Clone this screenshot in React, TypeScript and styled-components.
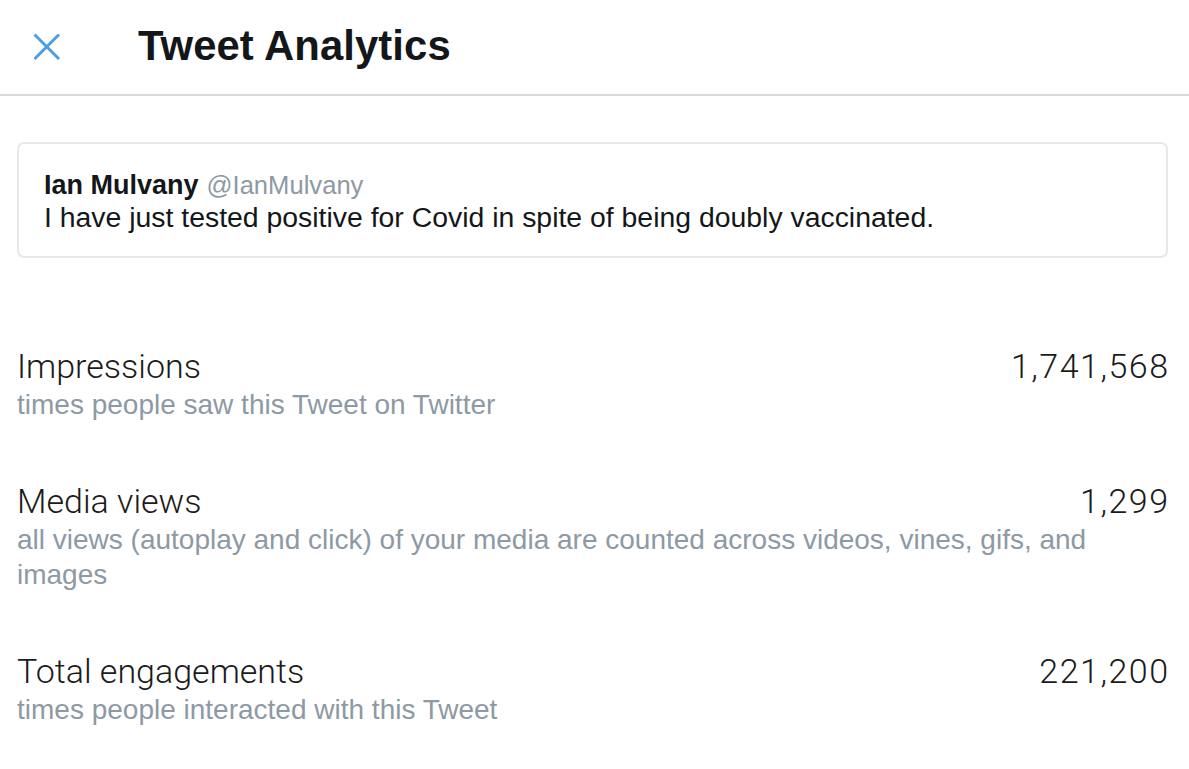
import React from "react";
import styled, { createGlobalStyle } from "styled-components";

const GlobalStyle = createGlobalStyle`
  html, body {
    margin: 0;
    padding: 0;
    background: #fff;
  }
  body {
    font-family: "Liberation Sans", Arial, sans-serif;
    color: #14171a;
  }
`;

const Page = styled.div`
  width: 1189px;
  min-height: 769px;
  display: flex;
  flex-direction: column;
`;

const Header = styled.header`
  height: 96px;
  display: flex;
  align-items: center;
  border-bottom: 2px solid #d9d9d9;
  box-sizing: border-box;
`;

const CloseButton = styled.button`
  width: 138px;
  height: 96px;
  padding: 0 0 0 32px;
  border: none;
  background: none;
  display: flex;
  align-items: center;
  cursor: pointer;
`;

const Title = styled.h1`
  margin: 0 0 2px 0;
  font-family: "Liberation Sans", Arial, sans-serif;
  font-size: 41.8px;
  font-weight: 700;
  color: #14171a;
  letter-spacing: 0.1px;
`;

const Body = styled.main`
  padding: 46px 21px 0 17px;
  display: flex;
  flex-direction: column;
`;

const TweetCard = styled.div`
  border: 2px solid #e6e8ea;
  border-radius: 7px;
  padding: 25px 26px 23px 25px;
`;

const AuthorLine = styled.div`
  display: flex;
  align-items: baseline;
  gap: 8px;
  line-height: 32px;
`;

const AuthorName = styled.span`
  font-size: 27px;
  font-weight: 700;
  color: #14171a;
`;

const Handle = styled.span`
  font-size: 25.6px;
  color: #8d99a4;
`;

const TweetText = styled.p`
  margin: 0;
  font-size: 28.4px;
  line-height: 32px;
  color: #14171a;
`;

const Stats = styled.div`
  margin-top: 88px;
  display: flex;
  flex-direction: column;
  gap: 59px;
`;

const StatBlock = styled.div`
  display: flex;
  flex-direction: column;
`;

const StatHead = styled.div`
  display: flex;
  justify-content: space-between;
  align-items: baseline;
  font-family: Roboto, "Liberation Sans", Arial, sans-serif;
  font-weight: 300;
  font-size: 34px;
  line-height: 41px;
  color: #1b1b1b;
`;

const StatValue = styled.span`
  letter-spacing: 1.5px;
  margin-right: -1.5px;
`;

const StatNote = styled.p`
  margin: 0;
  font-size: 28px;
  line-height: 35px;
  color: #8d99a4;
`;

const stats = [
  {
    label: "Impressions",
    value: "1,741,568",
    note: "times people saw this Tweet on Twitter",
  },
  {
    label: "Media views",
    value: "1,299",
    note: "all views (autoplay and click) of your media are counted across videos, vines, gifs, and images",
  },
  {
    label: "Total engagements",
    value: "221,200",
    note: "times people interacted with this Tweet",
  },
];

const CloseIcon = () => (
  <svg width="30" height="30" viewBox="0 0 30 30">
    <path
      d="M2.5 2.5 L27 27 M27 2.5 L2.5 27"
      stroke="#4f9fe0"
      strokeWidth="3"
      fill="none"
    />
  </svg>
);

const App: React.FC = () => {
  return (
    <Page>
      <GlobalStyle />
      <Header>
        <CloseButton aria-label="Close">
          <CloseIcon />
        </CloseButton>
        <Title>Tweet Analytics</Title>
      </Header>
      <Body>
        <TweetCard>
          <AuthorLine>
            <AuthorName>Ian Mulvany</AuthorName>
            <Handle>@IanMulvany</Handle>
          </AuthorLine>
          <TweetText>
            I have just tested positive for Covid in spite of being doubly
            vaccinated.
          </TweetText>
        </TweetCard>
        <Stats>
          {stats.map((item, index) => {
            return (
              <StatBlock key={index}>
                <StatHead>
                  <span>{item.label}</span>
                  <StatValue>{item.value}</StatValue>
                </StatHead>
                <StatNote>{item.note}</StatNote>
              </StatBlock>
            );
          })}
        </Stats>
      </Body>
    </Page>
  );
};

export default App;
